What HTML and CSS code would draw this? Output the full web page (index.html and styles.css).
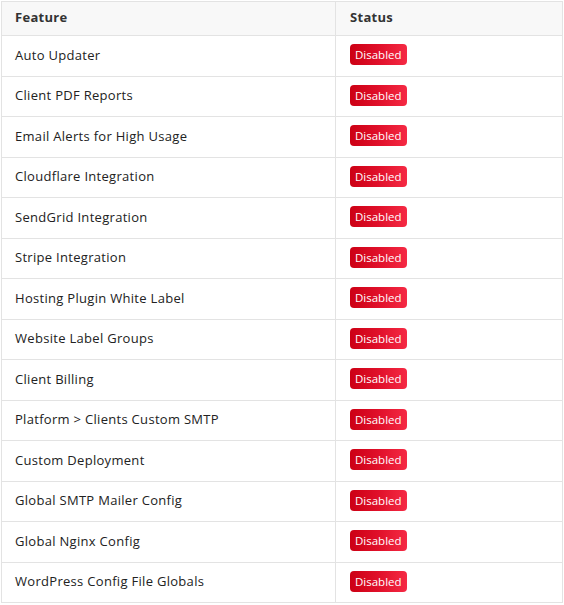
FILE: index.html
```html
<!DOCTYPE html>
<html>
<head>
<meta charset="utf-8">
<link rel="stylesheet" href="styles.css">
</head>
<body>
<div class="wrap">
<table class="features">
  <thead>
    <tr><th class="col-feature">Feature</th><th class="col-status">Status</th></tr>
  </thead>
  <tbody>
    <tr><td>Auto Updater</td><td class="col-status"><span class="badge">Disabled</span></td></tr>
    <tr><td>Client PDF Reports</td><td class="col-status"><span class="badge">Disabled</span></td></tr>
    <tr><td>Email Alerts for High Usage</td><td class="col-status"><span class="badge">Disabled</span></td></tr>
    <tr><td>Cloudflare Integration</td><td class="col-status"><span class="badge">Disabled</span></td></tr>
    <tr><td>SendGrid Integration</td><td class="col-status"><span class="badge">Disabled</span></td></tr>
    <tr><td>Stripe Integration</td><td class="col-status"><span class="badge">Disabled</span></td></tr>
    <tr><td>Hosting Plugin White Label</td><td class="col-status"><span class="badge">Disabled</span></td></tr>
    <tr><td>Website Label Groups</td><td class="col-status"><span class="badge">Disabled</span></td></tr>
    <tr><td>Client Billing</td><td class="col-status"><span class="badge">Disabled</span></td></tr>
    <tr><td>Platform &gt; Clients Custom SMTP</td><td class="col-status"><span class="badge">Disabled</span></td></tr>
    <tr><td>Custom Deployment</td><td class="col-status"><span class="badge">Disabled</span></td></tr>
    <tr><td>Global SMTP Mailer Config</td><td class="col-status"><span class="badge">Disabled</span></td></tr>
    <tr><td>Global Nginx Config</td><td class="col-status"><span class="badge">Disabled</span></td></tr>
    <tr><td>WordPress Config File Globals</td><td class="col-status"><span class="badge">Disabled</span></td></tr>
  </tbody>
</table>
</div>
</body>
</html>
```
FILE: styles.css
```css
html, body {
  margin: 0;
  padding: 0;
  background: #ffffff;
}
.wrap {
  padding: 1px 0 0 1px;
  width: 563px;
}
.features {
  width: 562px;
  border-collapse: collapse;
  font-family: "Open Sans", "Liberation Sans", sans-serif;
  font-size: 13px;
  letter-spacing: 0.3px;
  color: #222222;
}
.features th,
.features td {
  border: 1px solid #e3e3e3;
  text-align: left;
  padding: 0 13px 2px 13px;
  vertical-align: middle;
}
.features th {
  background: #f8f8f8;
  font-weight: 700;
  color: #333333;
  height: 30px;
  padding-bottom: 3px;
}
.features td {
  height: 37.5px;
}
.features .col-status {
  padding-left: 14px;
}
.col-feature {
  width: 307px;
}
.badge {
  display: inline-block;
  height: 21px;
  line-height: 21px;
  padding: 0 5px;
  border-radius: 4px;
  background: linear-gradient(90deg, #cc0014 0%, #e0102a 50%, #f52a44 100%);
  color: #ffffff;
  font-size: 11.5px;
  letter-spacing: 0;
  vertical-align: middle;
}
```
